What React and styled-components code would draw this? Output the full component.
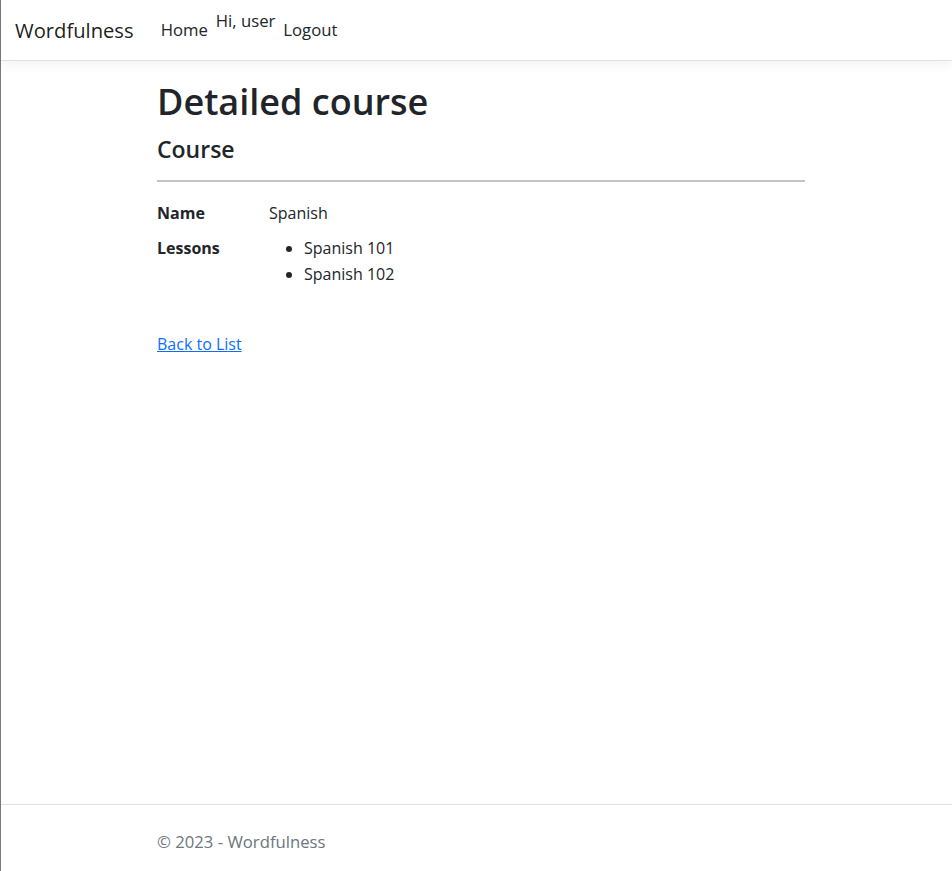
import React from 'react';
import styled, { createGlobalStyle } from 'styled-components';

const GlobalStyle = createGlobalStyle`
  html, body {
    margin: 0;
    padding: 0;
    background: #fff;
  }
  body {
    font-family: "Open Sans", "Noto Sans", sans-serif;
    font-size: 16px;
    line-height: 1.5;
    color: #212529;
  }
`;

const App = () => {
  const lessons = ['Spanish 101', 'Spanish 102'];

  return (
    <Page>
      <GlobalStyle />
      <Navbar>
        <Brand href="#">Wordfulness</Brand>
        <NavList>
          <NavLink href="#">Home</NavLink>
          <Greeting>Hi, user</Greeting>
          <NavLink href="#">Logout</NavLink>
        </NavList>
      </Navbar>

      <Main>
        <Title>Detailed course</Title>
        <SubTitle>Course</SubTitle>
        <Rule />
        <Details>
          <Term>Name</Term>
          <Value>Spanish</Value>
          <Term>Lessons</Term>
          <Value>
            <Lessons>
              {lessons.map((l) => (
                <li key={l}>{l}</li>
              ))}
            </Lessons>
          </Value>
        </Details>
        <BackLink href="#">Back to List</BackLink>
      </Main>

      <Footer>
        <FooterInner>&copy; 2023 - Wordfulness</FooterInner>
      </Footer>
    </Page>
  );
};

// Styled Components

const Page = styled.div`
  min-height: 100vh;
  display: flex;
  flex-direction: column;
  border-left: 1px solid #7a7a7a;
  box-sizing: border-box;
`;

const Navbar = styled.nav`
  height: 60px;
  display: flex;
  align-items: center;
  padding: 0 14px;
  border-bottom: 1px solid #dee2e6;
  box-shadow: 0 4px 12px rgba(0, 0, 0, 0.05);
  background: #fff;
`;

const Brand = styled.a`
  font-size: 20.2px;
  color: rgba(0, 0, 0, 0.9);
  text-decoration: none;
  margin-right: 19px;
`;

const NavList = styled.div`
  display: flex;
  align-items: center;
`;

const NavLink = styled.a`
  padding: 0 8px;
  color: #212529;
  text-decoration: none;
  font-size: 16.7px;
`;

const Greeting = styled.span`
  font-size: 16.7px;
  color: #212529;
  margin-top: -18px;
`;

const Main = styled.main`
  flex: 1;
  width: 648px;
  margin-left: 156px;
  padding-top: 19px;
`;

const Title = styled.h1`
  margin: 0 0 13px;
  font-size: 36px;
  font-weight: 600;
  line-height: 1.2;
`;

const SubTitle = styled.h4`
  margin: 0 0 8px;
  font-size: 23px;
  font-weight: 600;
  line-height: 1.2;
`;

const Rule = styled.hr`
  margin: 16px 0 19px;
  border: 0;
  border-top: 2px solid #c4c4c4;
`;

const Details = styled.dl`
  display: grid;
  grid-template-columns: 112px 1fr;
  margin: 0 0 16px;
`;

const Term = styled.dt`
  font-weight: 700;
  margin-bottom: 11px;
`;

const Value = styled.dd`
  margin: 0 0 11px;
`;

const Lessons = styled.ul`
  margin: 0;
  padding-left: 35px;
  line-height: 26px;
  margin-top: -1px;
`;

const BackLink = styled.a`
  display: inline-block;
  margin-top: 18px;
  color: #0d6efd;
  text-decoration: underline;
`;

const Footer = styled.footer`
  border-top: 1px solid #dee2e6;
  height: 67px;
  box-sizing: border-box;
  padding-top: 24px;
  color: #6c757d;
  font-size: 16.7px;
`;

const FooterInner = styled.div`
  margin-left: 156px;
`;

export default App;
